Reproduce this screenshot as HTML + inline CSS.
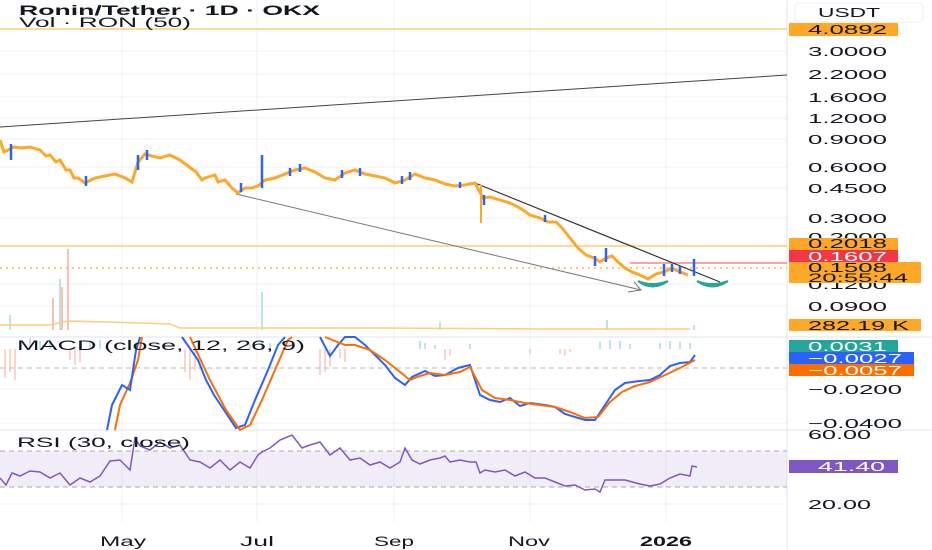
<!DOCTYPE html>
<html><head><meta charset="utf-8"><style>
html,body{margin:0;padding:0;background:#fff;width:932px;height:550px;overflow:hidden;font-family:"Liberation Sans",sans-serif}
svg{display:block}
</style></head><body>
<svg width="932" height="550" viewBox="0 0 932 550" xmlns="http://www.w3.org/2000/svg" font-family="Liberation Sans, sans-serif">
<!-- grid -->
<g stroke="#f0f1f4" stroke-width="1">
<line x1="122" y1="0" x2="122" y2="522"/><line x1="257" y1="0" x2="257" y2="522"/><line x1="394" y1="0" x2="394" y2="522"/><line x1="530" y1="0" x2="530" y2="522"/><line x1="666" y1="0" x2="666" y2="522"/>
<line x1="0" y1="51" x2="787" y2="51"/><line x1="0" y1="74" x2="787" y2="74"/><line x1="0" y1="97" x2="787" y2="97"/><line x1="0" y1="118" x2="787" y2="118"/><line x1="0" y1="139" x2="787" y2="139"/><line x1="0" y1="167" x2="787" y2="167"/><line x1="0" y1="188" x2="787" y2="188"/><line x1="0" y1="218" x2="787" y2="218"/><line x1="0" y1="284" x2="787" y2="284"/><line x1="0" y1="306" x2="787" y2="306"/>
<line x1="0" y1="389" x2="787" y2="389"/><line x1="0" y1="423" x2="787" y2="423"/><line x1="0" y1="504" x2="787" y2="504"/>
</g>
<line x1="0" y1="337" x2="932" y2="337" stroke="#e0e3eb"/>
<line x1="0" y1="430" x2="932" y2="430" stroke="#e0e3eb"/>
<line x1="787" y1="0" x2="787" y2="550" stroke="#e0e3eb"/>
<!-- RSI band -->
<rect x="0" y="451" width="787" height="36" fill="#7e57c2" fill-opacity="0.1"/>
<line x1="0" y1="451" x2="787" y2="451" stroke="#aaa" stroke-dasharray="5,4"/>
<line x1="0" y1="487" x2="787" y2="487" stroke="#aaa" stroke-dasharray="5,4"/>
<line x1="0" y1="368" x2="787" y2="368" stroke="#bbb" stroke-dasharray="5,4"/>
<!-- horizontal levels -->
<line x1="0" y1="29" x2="787" y2="29" stroke="#ffcc80" stroke-width="1.5"/>
<line x1="0" y1="246" x2="787" y2="246" stroke="#ffcc80" stroke-width="1.5"/>
<line x1="630" y1="263" x2="787" y2="263" stroke="#f28b82" stroke-width="1.5"/>
<line x1="0" y1="268" x2="787" y2="268" stroke="#ffb74d" stroke-width="1.5" stroke-dasharray="2,4"/>
<!-- trend lines -->
<line x1="0" y1="127" x2="787" y2="75" stroke="#444" stroke-width="1"/>
<line x1="236" y1="194" x2="641" y2="290" stroke="#777" stroke-width="1"/>
<path d="M628 292 L641 290 L634 282" fill="none" stroke="#777"/>
<line x1="475" y1="183" x2="720" y2="282" stroke="#333" stroke-width="1.2"/>
<!-- teal marks -->
<path d="M638 281 Q652 292 668 281 Q652 287 638 281Z" fill="#26a69a" stroke="#26a69a" stroke-width="2"/>
<path d="M697 281 Q712 292 728 281 Q712 287 697 281Z" fill="#26a69a" stroke="#26a69a" stroke-width="2"/>
<!-- price -->
<polyline fill="none" stroke="#ffa726" stroke-width="3" points="0,140 4,152 8,150 14,147 22,148 30,147 40,150 46,156 50,155 56,162 60,160 66,170 70,170 74,178 78,178 85,183 95,178 105,176 115,174 125,178 132,182 138,162 145,154 152,156 160,158 170,155 180,160 188,166 196,172 202,180 205,178 215,175 218,182 225,180 232,188 238,193 245,188 252,188 258,186 265,180 275,178 285,174 295,170 305,168 315,172 325,178 335,180 345,173 355,170 365,174 375,176 385,178 395,183 405,180 415,174 425,178 435,180 445,184 455,186 465,185 475,183 483,198 490,197 500,200 510,203 520,208 530,215 540,218 548,222 556,222 562,228 570,238 578,248 586,255 594,258 600,262 606,258 612,256 618,262 625,268 632,272 640,275 648,279 656,274 664,272 672,268 680,272 688,275"/>
<g stroke="#2962ff" stroke-width="2.5">
<line x1="11" y1="144" x2="11" y2="160"/><line x1="86" y1="176" x2="86" y2="186"/><line x1="138" y1="155" x2="138" y2="170"/><line x1="147" y1="150" x2="147" y2="160"/><line x1="241" y1="183" x2="241" y2="192"/><line x1="262" y1="155" x2="262" y2="188"/><line x1="290" y1="168" x2="290" y2="176"/><line x1="300" y1="164" x2="300" y2="172"/><line x1="342" y1="170" x2="342" y2="178"/><line x1="360" y1="168" x2="360" y2="176"/><line x1="402" y1="176" x2="402" y2="184"/><line x1="410" y1="172" x2="410" y2="180"/><line x1="460" y1="182" x2="460" y2="188"/><line x1="484" y1="195" x2="484" y2="205"/><line x1="545" y1="215" x2="545" y2="222"/><line x1="595" y1="256" x2="595" y2="266"/><line x1="606" y1="248" x2="606" y2="262"/><line x1="664" y1="264" x2="664" y2="276"/><line x1="672" y1="264" x2="672" y2="272"/><line x1="680" y1="266" x2="680" y2="274"/><line x1="694" y1="259" x2="694" y2="276"/>
</g>
<line x1="481" y1="185" x2="481" y2="223" stroke="#ffa726" stroke-width="2"/>
<!-- volume -->
<g stroke-width="1.5">
<line x1="68" y1="249" x2="68" y2="330" stroke="#f8a99b"/><line x1="60" y1="279" x2="60" y2="330" stroke="#a6dcd6"/><line x1="62" y1="287" x2="62" y2="330" stroke="#f8a99b"/><line x1="53" y1="298" x2="53" y2="330" stroke="#f8a99b"/><line x1="262" y1="292" x2="262" y2="330" stroke="#a6dcd6"/><line x1="10" y1="315" x2="10" y2="330" stroke="#a6dcd6"/><line x1="440" y1="322" x2="440" y2="330" stroke="#a6dcd6"/><line x1="607" y1="320" x2="607" y2="330" stroke="#a6dcd6"/><line x1="694" y1="325" x2="694" y2="330" stroke="#a6dcd6"/>
</g>
<polyline fill="none" stroke="#ffcc80" stroke-width="1.5" points="0,325 50,325 62,322 70,321 140,323 170,324 180,328 260,328 380,328 550,329 690,329"/>
<!-- MACD histogram -->
<g stroke-width="1">
<path d="M5 349V378M10 349V372M15 349V380M70 349V360M75 349V365M80 349V362M185 349V372M190 349V380M195 349V370M320 349V375M325 349V372M330 349V366M340 349V358M345 349V362M445 349V360M450 349V356M530 349V354M560 349V354M565 349V356M570 349V352" stroke="#f8a99b"/>
<path d="M20 349V340M30 349V338M40 349V341M50 349V339M90 349V342M100 349V340M130 349V343M250 349V344M262 349V342M270 349V343M420 349V341M425 349V343M435 349V345M470 349V344M600 349V342M610 349V340M620 349V341M630 349V344M660 349V343M670 349V341M680 349V342M690 349V343" stroke="#80cbc4"/>
</g>
<!-- MACD lines -->
<polyline fill="none" stroke="#ff6d00" stroke-width="2" points="115,430 120,405 130,383 138,360 142,337"/>
<polyline fill="none" stroke="#2962ff" stroke-width="2" points="107,430 112,405 122,385 130,390 136,350 140,337"/>
<polyline fill="none" stroke="#2962ff" stroke-width="2" points="182,337 198,360 206,380 214,395 224,410 236,428 245,425 255,400 268,370 278,345 285,337"/>
<polyline fill="none" stroke="#ff6d00" stroke-width="2" points="190,337 210,380 226,410 240,430 250,425 262,400 275,370 288,340 292,337"/>
<polyline fill="none" stroke="#2962ff" stroke-width="2" points="320,337 330,356 338,345 345,337 355,337 365,345 375,355 385,365 395,378 405,385 412,377 425,371 435,376 445,375 458,368 470,365 480,395 490,400 500,402 510,398 520,406 530,403 545,405 555,407 565,414 575,417 585,420 595,420 605,405 615,390 625,383 640,381 650,380 660,375 670,366 680,363 690,362 695,355"/>
<polyline fill="none" stroke="#ff6d00" stroke-width="2" points="325,337 345,345 355,345 370,350 385,360 400,372 410,380 420,376 430,373 445,375 460,372 470,367 482,390 495,398 510,400 525,403 540,405 555,407 570,412 585,418 598,417 610,402 622,392 635,386 650,382 665,375 680,368 695,360"/>
<!-- RSI line -->
<polyline fill="none" stroke="#7e57c2" stroke-width="1.5" points="0,478 6,485 12,473 20,476 30,471 40,472 50,478 60,473 70,485 80,478 90,482 100,476 110,461 120,460 130,470 135,438 140,446 150,450 160,442 170,448 180,445 190,460 200,462 210,468 220,460 230,470 240,462 250,468 258,455 262,452 270,448 280,440 292,435 302,448 310,445 320,442 330,455 340,448 350,460 360,458 370,465 380,462 390,468 400,462 405,448 412,460 420,464 430,460 440,458 445,456 450,462 460,460 470,462 476,462 480,473 485,470 495,472 505,470 515,476 525,472 535,478 545,478 555,482 565,486 575,485 585,490 595,489 600,492 605,480 615,480 625,480 640,484 650,486 660,484 670,478 680,474 690,476 692,466 697,467"/>
<!-- header -->
<text x="19" y="15" font-size="14" font-weight="bold" fill="#131722" textLength="301" lengthAdjust="spacingAndGlyphs">Ronin/Tether · 1D · OKX</text>
<text x="19" y="27" font-size="14" fill="#131722" textLength="172" lengthAdjust="spacingAndGlyphs">Vol · RON (50)</text>
<text x="17" y="350" font-size="14" fill="#131722" textLength="288" lengthAdjust="spacingAndGlyphs">MACD (close, 12, 26, 9)</text>
<text x="17" y="447" font-size="14" fill="#131722" textLength="173" lengthAdjust="spacingAndGlyphs">RSI (30, close)</text>
<!-- axis -->
<rect x="795" y="3" width="128" height="19" rx="4" fill="#fff" stroke="#eceff3"/>
<text x="818" y="17" font-size="13" fill="#131722" textLength="62" lengthAdjust="spacingAndGlyphs">USDT</text>
<g font-size="13" fill="#131722">
<text x="808" y="56" textLength="79" lengthAdjust="spacingAndGlyphs">3.0000</text><text x="808" y="79" textLength="79" lengthAdjust="spacingAndGlyphs">2.2000</text><text x="808" y="102" textLength="79" lengthAdjust="spacingAndGlyphs">1.6000</text><text x="808" y="123" textLength="79" lengthAdjust="spacingAndGlyphs">1.2000</text><text x="808" y="144" textLength="79" lengthAdjust="spacingAndGlyphs">0.9000</text><text x="808" y="172" textLength="79" lengthAdjust="spacingAndGlyphs">0.6000</text><text x="808" y="193" textLength="79" lengthAdjust="spacingAndGlyphs">0.4500</text><text x="808" y="223" textLength="79" lengthAdjust="spacingAndGlyphs">0.3000</text><text x="808" y="242" textLength="79" lengthAdjust="spacingAndGlyphs">0.2000</text><text x="808" y="289" textLength="79" lengthAdjust="spacingAndGlyphs">0.1200</text><text x="808" y="311" textLength="79" lengthAdjust="spacingAndGlyphs">0.0900</text>
<text x="808" y="394" textLength="94" lengthAdjust="spacingAndGlyphs">−0.0200</text><text x="808" y="428" textLength="94" lengthAdjust="spacingAndGlyphs">−0.0400</text><text x="808" y="439" textLength="63" lengthAdjust="spacingAndGlyphs">60.00</text><text x="808" y="509" textLength="63" lengthAdjust="spacingAndGlyphs">20.00</text>
</g>
<rect x="789" y="23" width="109" height="13" fill="#ffa726"/><text x="808" y="34" font-size="13" fill="#131722" textLength="79" lengthAdjust="spacingAndGlyphs">4.0892</text>
<rect x="789" y="238" width="109" height="12" fill="#ffa726"/><text x="808" y="248" font-size="13" fill="#131722" textLength="79" lengthAdjust="spacingAndGlyphs">0.2018</text>
<rect x="789" y="250" width="109" height="12" fill="#f23645"/><text x="808" y="261" font-size="13" fill="#fff" textLength="79" lengthAdjust="spacingAndGlyphs">0.1607</text>
<rect x="789" y="262" width="132" height="21" fill="#ffa726"/><text x="808" y="272" font-size="13" fill="#131722" textLength="79" lengthAdjust="spacingAndGlyphs">0.1508</text><text x="808" y="282" font-size="12" fill="#131722" textLength="100" lengthAdjust="spacingAndGlyphs">20:55:44</text>
<rect x="789" y="319" width="132" height="12" fill="#ffa726"/><text x="808" y="330" font-size="13" fill="#131722" textLength="101" lengthAdjust="spacingAndGlyphs">282.19 K</text>
<rect x="789" y="340" width="109" height="12" fill="#26a69a"/><text x="808" y="351" font-size="13" fill="#fff" textLength="79" lengthAdjust="spacingAndGlyphs">0.0031</text>
<rect x="789" y="352" width="125" height="12" fill="#2962ff"/><text x="808" y="363" font-size="13" fill="#fff" textLength="94" lengthAdjust="spacingAndGlyphs">−0.0027</text>
<rect x="789" y="364" width="125" height="12" fill="#ff6d00"/><text x="808" y="375" font-size="13" fill="#fff" textLength="94" lengthAdjust="spacingAndGlyphs">−0.0057</text>
<rect x="789" y="460" width="109" height="13" fill="#7e57c2"/><text x="818" y="471" font-size="13" fill="#fff" textLength="67" lengthAdjust="spacingAndGlyphs">41.40</text>
<!-- time axis -->
<g font-size="14" fill="#131722">
<text x="100" y="546" textLength="46" lengthAdjust="spacingAndGlyphs">May</text><text x="240" y="546" textLength="34" lengthAdjust="spacingAndGlyphs">Jul</text><text x="374" y="546" textLength="40" lengthAdjust="spacingAndGlyphs">Sep</text><text x="508" y="546" textLength="42" lengthAdjust="spacingAndGlyphs">Nov</text><text x="640" y="546" font-weight="bold" textLength="52" lengthAdjust="spacingAndGlyphs">2026</text>
</g>
</svg>
</body></html>
